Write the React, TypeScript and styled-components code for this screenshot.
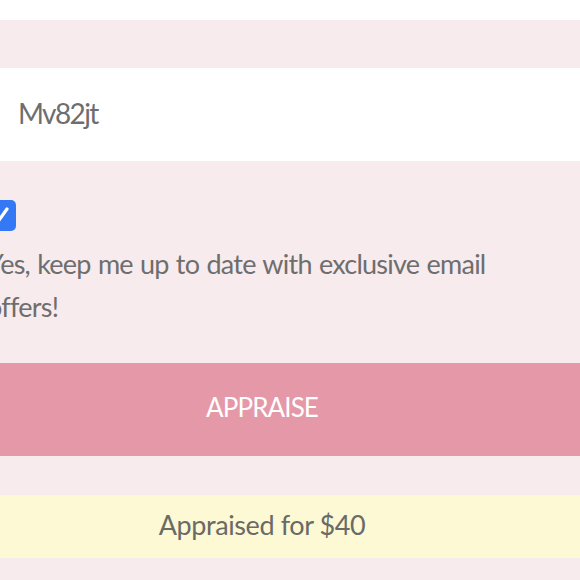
import React from "react";
import styled, { createGlobalStyle } from "styled-components";

const GlobalStyle = createGlobalStyle`
  html, body { margin: 0; padding: 0; }
  body {
    background: #f7ebed;
    font-family: Lato, "Noto Sans", sans-serif;
    color: #6e6e6e;
    overflow: hidden;
  }
`;

const TopBar = styled.div`
  height: 20px;
  background: #ffffff;
`;

const Page = styled.main`
  background: #f7ebed;
  padding-top: 48px;
  height: 560px;
  box-sizing: border-box;
`;

const Form = styled.form`
  margin-left: -56px;
  width: 636px;
  display: flex;
  flex-direction: column;
`;

const CodeInput = styled.input`
  height: 93px;
  box-sizing: border-box;
  border: none;
  outline: none;
  background: #ffffff;
  padding: 0 0 4px 74px;
  font-family: inherit;
  font-size: 28px;
  letter-spacing: -1.6px;
  color: #6e6e6e;
`;

const OptIn = styled.div`
  display: flex;
  flex-direction: column;
  padding-left: 40px;
  margin-top: 39px;
`;

const Check = styled.span`
  width: 32px;
  height: 31px;
  border-radius: 5px;
  background: #3478f6;
  display: flex;
  align-items: center;
  justify-content: center;
`;

const OptText = styled.p`
  margin: 11px 0 0 3px;
  width: 560px;
  font-size: 27px;
  letter-spacing: -0.75px;
  word-spacing: 1px;
  line-height: 43px;
  color: #6e6e6e;
`;

const Appraise = styled.button`
  margin-top: 35px;
  height: 93px;
  border: none;
  background: #e598a8;
  color: #ffffff;
  font-family: inherit;
  font-size: 26px;
  letter-spacing: -0.9px;
  text-transform: uppercase;
  padding: 0 0 5px;
`;

const Result = styled.div`
  margin-top: 39px;
  height: 63px;
  box-sizing: border-box;
  padding-bottom: 4px;
  background: #fcf9d4;
  display: flex;
  align-items: center;
  justify-content: center;
  font-size: 27px;
  letter-spacing: -0.4px;
  color: #6a6a66;
`;

export default function App() {
  return (
    <>
      <GlobalStyle />
      <TopBar />
      <Page>
        <Form onSubmit={(e) => e.preventDefault()}>
          <CodeInput defaultValue="Mv82jt" />
          <OptIn>
            <Check>
              <svg width="22" height="22" viewBox="0 0 22 22">
                <path d="M4 11.5 L9 16.5 L18 4" fill="none" stroke="#fff" strokeWidth="3.2" strokeLinecap="round" strokeLinejoin="round" />
              </svg>
            </Check>
            <OptText>Yes, keep me up to date with exclusive email offers!</OptText>
          </OptIn>
          <Appraise type="submit">Appraise</Appraise>
          <Result>Appraised for $40</Result>
        </Form>
      </Page>
    </>
  );
}
